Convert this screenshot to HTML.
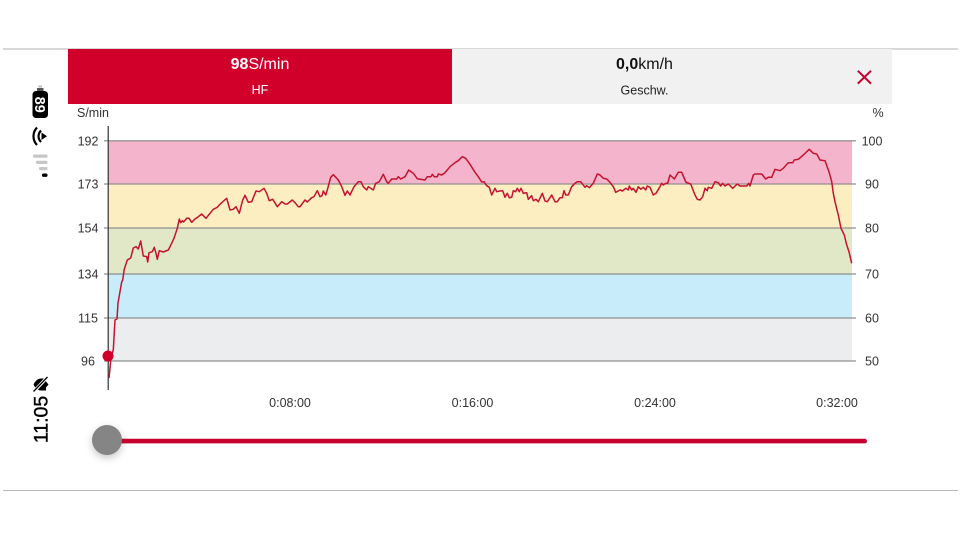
<!DOCTYPE html>
<html><head><meta charset="utf-8">
<style>
html,body{margin:0;padding:0;background:#fff;width:960px;height:540px;overflow:hidden}
svg{display:block}
text{font-family:"Liberation Sans",sans-serif}
</style></head><body>
<svg width="960" height="540" viewBox="0 0 960 540" xmlns="http://www.w3.org/2000/svg">
<defs><filter id="s" x="-50%" y="-50%" width="200%" height="200%"><feDropShadow dx="0" dy="3" stdDeviation="4" flood-color="#000" flood-opacity=".22"/></filter></defs>
<rect width="960" height="540" fill="#fff"/>
<rect x="3" y="48.5" width="955" height="1" fill="#b0b0b0"/>
<rect x="3" y="490" width="955" height="1" fill="#b8b8b8"/>
<rect x="68" y="49" width="384" height="55" fill="#d0002b"/>
<rect x="452" y="49" width="440" height="55" fill="#f1f1f2"/>
<text x="260" y="69" text-anchor="middle" font-size="16" fill="#fff"><tspan font-weight="700">98</tspan>S/min</text>
<text x="260" y="94" text-anchor="middle" font-size="12.5" fill="#fff">HF</text>
<text x="644.5" y="69" text-anchor="middle" font-size="16" fill="#111"><tspan font-weight="700">0,0</tspan>km/h</text>
<text x="644.5" y="94.5" text-anchor="middle" font-size="12.5" fill="#222">Geschw.</text>
<path d="M857.8 70.8L871 83.6M871 70.8L857.8 83.6" stroke="#c8002d" stroke-width="2" fill="none"/>
<text x="77" y="117" font-size="12.5" fill="#333">S/min</text>
<text x="878" y="117" text-anchor="middle" font-size="12.5" fill="#333">%</text>
<rect x="108" y="141" width="744" height="43" fill="#f4b5cc"/>
<rect x="108" y="184" width="744" height="44" fill="#fdeec1"/>
<rect x="108" y="228" width="744" height="46" fill="#e1e8c7"/>
<rect x="108" y="274" width="744" height="44" fill="#c8ecf9"/>
<rect x="108" y="318" width="744" height="43" fill="#ecedee"/>
<g fill="#8c8c8c">
<rect x="104" y="140.2" width="752" height="1.2"/>
<rect x="104" y="183.4" width="752" height="1.2"/>
<rect x="104" y="227.4" width="752" height="1.2"/>
<rect x="104" y="273.4" width="752" height="1.2"/>
<rect x="104" y="317.4" width="752" height="1.2"/>
<rect x="104" y="360.4" width="752" height="1.2"/>
</g>
<rect x="107.6" y="126" width="1.2" height="264" fill="#333"/>
<g font-size="12.5" fill="#333" text-anchor="middle">
<text x="88" y="145.5">192</text><text x="88" y="188.5">173</text><text x="88" y="232.5">154</text><text x="88" y="278.5">134</text><text x="88" y="322.5">115</text><text x="88" y="365.5">96</text>
<text x="872" y="145.5">100</text><text x="872" y="188.5">90</text><text x="872" y="232.5">80</text><text x="872" y="278.5">70</text><text x="872" y="322.5">60</text><text x="872" y="365.5">50</text>
<text x="290" y="407">0:08:00</text><text x="472.5" y="407">0:16:00</text><text x="655" y="407">0:24:00</text><text x="837" y="407">0:32:00</text>
</g>
<polyline fill="none" stroke="#c4122f" stroke-width="1.5" stroke-linejoin="round" points="109,378 110,368 111,357 113.3,350 115,320 117,319 118,303 121.7,282 122.7,280 124.3,269 127.3,260 130.7,258 133.3,248 136,246.7 138.3,249 140.7,241 143.3,256 146.7,256.7 147.7,262 149,252.7 152.3,251.7 154.3,247.3 156,253.3 157.3,259.3 159.3,250.7 163.3,252 168.3,250 171.7,243.3 174,238.3 177.3,228.3 179.3,219 180.7,222.7 182.3,220.7 183.5,222 186.7,218.3 189,218.3 191.7,222.3 195,219 198.3,216.7 201.7,214 206,218.3 210,213.3 213.3,209.3 217.3,207.3 219.3,205 221.7,202.7 226.7,198.3 230,210 233.3,209.3 236,206.7 239.3,213.3 242.7,200 245,195.3 248.3,202.3 251.7,201.7 256,191 259.3,191.7 264,188.3 266.7,193.3 269.3,200.7 272.7,199.3 277.3,206.7 281.7,201.7 285,204 287.3,204 292.3,200 295,202.7 298.3,206.7 300,206.7 305,200 307.3,202 311.7,197.7 314,196.7 317.3,190.7 320,196.7 322,195.7 323.3,191 325.7,195 327.3,190 330.7,177.3 333.3,174.7 338.3,180 341.7,186.7 345,195.3 347.3,191 350,195 354,186.7 358.3,181.7 361,181.7 363.3,186.7 366.7,190 368.3,186.7 370.7,188.3 373.3,190 375.7,183.3 379.3,181.7 383.3,174.3 386.7,181.7 388.3,183.3 391.7,179 396.7,179 398.3,176.7 400.7,179 405,176.7 408.7,170 413.3,173.3 417.3,178.7 425,180 427.3,176.7 431,176.7 432.3,174.3 434.3,176.7 437.3,176.7 438.3,174 441.7,175 445,172.7 450,166.7 455,162.7 458.3,160.7 462.3,156.7 465.7,158.3 470,164.3 475,172.3 478.3,176.7 481.7,182 484,181.7 486.7,185.7 489.3,187.3 491.7,195 495,188.3 496.7,191.7 500,191 502.7,190.7 505,197.3 507.3,193.3 509.3,197.7 511.7,197.3 513.3,190.7 515.7,191.7 517.3,188.3 519.3,191.7 521,188.3 523.3,193.3 526.7,192.7 528.3,199.3 531.7,195.7 533.3,200.7 536,199.3 538.3,201.7 542.3,193.3 545,201 547.3,201.7 551.7,195 555,201.7 557.3,201.7 560,197.7 562.3,197.7 564,190.7 565.7,195 568.3,195 571.7,186.7 575,183.3 577.3,181.7 580.7,181.7 585,187.3 586.7,185.7 589.3,187.7 593.3,183.3 597.3,174 600,175 603.3,178.3 606.7,179 610,182.3 613.3,186.7 615.7,192.3 620,190 622.3,191 625.7,188.3 628.3,190 629.3,186 631.7,190 633.3,188.3 636,192.3 638.3,186.7 640.7,189.3 643.3,187.3 645.7,190 647.3,186 650,187.3 653.3,195 656,193.3 660,186.7 661.7,183.3 663.3,185 665.7,183.3 667.7,183.3 670,175 674.3,179 678.3,172.3 681.7,172.3 686,182.3 690.7,184 695,195 697.3,199.3 700,200 702.7,196.7 705,188.3 707.3,190.7 708.3,187.3 711.7,188.3 715,181.7 718.3,182.7 720.7,186 722.7,183.3 725,186 728.3,184 732.7,188.3 737.3,184 740,186 746.7,186 748.7,183.3 750,186 753.3,175 755,174 761.7,174 765.7,179 768.3,177.3 771.7,177.3 775,169.3 780,170.7 783.3,168.3 788.3,162.7 792.7,162.7 794.3,160 798.3,159.3 803.3,155 809.3,149.3 813.3,153.3 816.7,154 820,160 825,160.7 829,171.7 831.7,181.7 833.3,193.3 835,201.7 838.3,215 841,228.3 844.3,235 846.7,245 849,251.7 851.7,263.3"/>
<circle cx="108" cy="356" r="5.5" fill="#d0002b"/>
<rect x="107" y="438.8" width="760" height="4.6" rx="2.3" fill="#c8002d"/>
<circle cx="107" cy="440" r="15" fill="#858585" filter="url(#s)"/>
<rect x="32.5" y="91" width="15.5" height="27" rx="3.5" fill="#000"/>
<rect x="37" y="88" width="6.5" height="3" fill="#555"/>
<rect x="38.5" y="85.5" width="3.5" height="2" fill="#bbb"/>
<text transform="translate(35,104.7) rotate(90)" text-anchor="middle" font-size="14.5" font-weight="700" fill="#fff">89</text>
<path d="M37 127.5C32.3 132.5 32.3 140 37 145" stroke="#000" stroke-width="2.2" fill="none"/>
<path d="M41 130.5C37.7 134 37.7 138.5 41 142" stroke="#000" stroke-width="2.2" fill="none"/>
<path d="M41.5 132.5L47 136.3L41.5 140Z" fill="#000"/>
<rect x="33" y="154.5" width="14.5" height="3.2" rx="1.2" fill="#c6c6c6"/>
<rect x="36" y="160.8" width="11.5" height="3.2" rx="1.2" fill="#c6c6c6"/>
<rect x="39" y="167" width="8.5" height="3.2" rx="1.2" fill="#c6c6c6"/>
<rect x="42" y="173.5" width="5.5" height="3.4" rx="1.4" fill="#000"/>
<path d="M33.5 384.5C35 381.5 37.5 378.5 41 378.5L46 378.5L46 390.5L41 390.5C37.5 390.5 35 387.5 33.5 384.5Z" fill="#000"/>
<path d="M46 381.5L48.5 384.5L46 387.5Z" fill="#000"/>
<path d="M33 392.5L47.5 377" stroke="#fff" stroke-width="3.2" fill="none"/>
<path d="M33.5 391.5L47.5 377" stroke="#000" stroke-width="1.3" fill="none"/>
<text transform="translate(47.5,419.5) rotate(-90)" text-anchor="middle" font-size="19.5" font-weight="400" fill="#000" stroke="#000" stroke-width=".4">11:05</text>
</svg>
</body></html>
